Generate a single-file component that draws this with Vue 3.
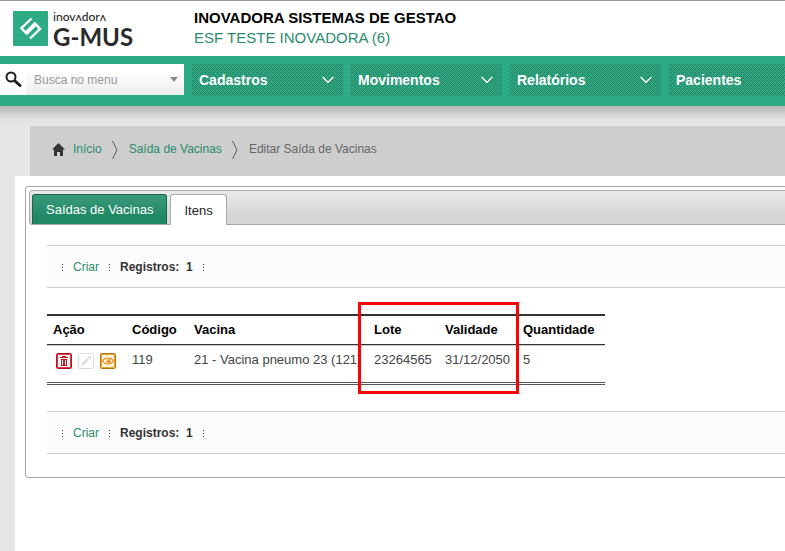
<script setup>
import { ref } from 'vue'

const search = ref('')
const menus = [
  { label: 'Cadastros', arrow: true },
  { label: 'Movimentos', arrow: true },
  { label: 'Relatórios', arrow: true },
  { label: 'Pacientes', arrow: false }
]
const columns = ['Ação', 'Código', 'Vacina', 'Lote', 'Validade', 'Quantidade']
const rows = [
  { codigo: '119', vacina: '21 - Vacina pneumo 23 (121)', lote: '23264565', validade: '31/12/2050', quantidade: '5' }
]
</script>

<template>
  <div class="page">
    <header class="top">
      <a class="logo" href="#" aria-label="inovadora G-MUS">
        <svg class="mark" viewBox="0 0 35 35">
          <rect width="35" height="35" rx="1" fill="#2cab84" />
          <g fill="none" stroke="#fff" stroke-width="2.400">
            <path d="M18.500 7.500L8.500 17l4 4.500L22.500 11.500" />
            <path d="M17 27.500L27 18l-4-4.500L13 23.500" />
          </g>
        </svg>
        <span class="words">
          <span class="brand">inovʌdorʌ</span>
          <span class="product">G-MUS</span>
        </span>
      </a>
      <div class="unit">
        <strong>INOVADORA SISTEMAS DE GESTAO</strong>
        <a href="#">ESF TESTE INOVADORA (6)</a>
      </div>
    </header>

    <nav class="bar">
      <label class="search">
        <svg class="lens" viewBox="0 0 18 18" aria-hidden="true">
          <circle cx="6" cy="6" r="4.500" fill="none" stroke="#1c1c1c" stroke-width="2" />
          <path d="M10 10l5 4.500" stroke="#1c1c1c" stroke-width="3" stroke-linecap="round" />
        </svg>
        <span class="combo">
          <input v-model="search" type="text" placeholder="Busca no menu" aria-label="Busca no menu" />
          <svg class="caret" viewBox="0 0 8 5" aria-hidden="true"><path d="M0 0h8L4 5z" fill="#888" /></svg>
        </span>
      </label>
      <button v-for="m in menus" :key="m.label" class="menu" type="button">
        <span>{{ m.label }}</span>
        <svg v-if="m.arrow" viewBox="0 0 12 8" aria-hidden="true">
          <path d="M0 2l6 6 6-6" fill="none" stroke="#1d6f56" stroke-width="1" />
          <path d="M.5 1L6 6.500 11.500 1" fill="none" stroke="#fff" stroke-width="1.500" />
        </svg>
      </button>
    </nav>

    <div class="backdrop">
      <nav class="crumbs">
        <svg class="home" viewBox="0 0 13 13" aria-hidden="true">
          <path d="M6.500 0L13 6.500h-2V13H8V9H5v4H2V6.500H0z" fill="#333" />
        </svg>
        <a href="#">Início</a>
        <svg class="sep" viewBox="0 0 6 18" aria-hidden="true"><path d="M.5 0l4.500 9L.5 18" fill="none" stroke="#555" /></svg>
        <a href="#">Saída de Vacinas</a>
        <svg class="sep" viewBox="0 0 6 18" aria-hidden="true"><path d="M.5 0l4.500 9L.5 18" fill="none" stroke="#555" /></svg>
        <span>Editar Saída de Vacinas</span>
      </nav>

      <main class="content">
        <section class="panel">
          <div class="tabs">
            <button class="tab" type="button">Saídas de Vacinas</button>
            <button class="tab current" type="button">Itens</button>
          </div>
          <div class="body">
            <div class="tools">
              <i class="dots"></i><a href="#">Criar</a><i class="dots"></i><b>Registros:&nbsp; 1</b><i class="dots"></i>
            </div>
            <div class="grid">
              <table>
                <colgroup>
                  <col class="c-acao" /><col class="c-codigo" /><col class="c-vacina" />
                  <col class="c-lote" /><col class="c-validade" /><col class="c-qtd" />
                </colgroup>
                <thead>
                  <tr><th v-for="c in columns" :key="c">{{ c }}</th></tr>
                </thead>
                <tbody>
                  <tr v-for="r in rows" :key="r.codigo">
                    <td>
                      <div class="actions">
                        <button type="button" aria-label="Excluir">
                          <svg viewBox="0 0 16 16">
                            <rect x=".5" y=".5" width="15" height="15" rx="1" fill="#fff" stroke="#b5121b" />
                            <rect x="1.500" y="1.500" width="13" height="13" fill="#fff" stroke="#dc3a42" />
                            <path d="M6 3h4v1h2v1H4V4h2zM5 6h6v7H5z" fill="#c4161f" />
                            <path d="M7 4h2v0H7zM6 7h1v5H6zM9 7h1v5H9z" fill="#fff" />
                          </svg>
                        </button>
                        <button type="button" aria-label="Editar" disabled>
                          <svg viewBox="0 0 16 16">
                            <rect x=".5" y=".5" width="15" height="15" rx="1" fill="#fff" stroke="#dcdcdc" />
                            <path d="M3 13l1-3 5.500-5.500 2 2L6 12zM10 4l1-1h1.500l.5.500V5l-1 1z" fill="#dedede" />
                          </svg>
                        </button>
                        <button type="button" aria-label="Visualizar">
                          <svg viewBox="0 0 16 16">
                            <rect x=".5" y=".5" width="15" height="15" rx="1" fill="#fff3da" stroke="#b5700c" />
                            <rect x="1.500" y="1.500" width="13" height="13" fill="none" stroke="#f0a637" />
                            <path d="M2.500 8C5 4 11 4 13.500 8 11 12 5 12 2.500 8z" fill="#fff" stroke="#ee8f1c" stroke-width="1.200" />
                            <circle cx="8.500" cy="8" r="2.200" fill="#ee8a12" />
                            <circle cx="8" cy="7" r=".8" fill="#fff" />
                          </svg>
                        </button>
                      </div>
                    </td>
                    <td>{{ r.codigo }}</td>
                    <td>{{ r.vacina }}</td>
                    <td>{{ r.lote }}</td>
                    <td>{{ r.validade }}</td>
                    <td>{{ r.quantidade }}</td>
                  </tr>
                </tbody>
              </table>
              <div class="highlight"></div>
            </div>
            <div class="tools">
              <i class="dots"></i><a href="#">Criar</a><i class="dots"></i><b>Registros:&nbsp; 1</b><i class="dots"></i>
            </div>
          </div>
        </section>
      </main>
    </div>
  </div>
</template>

<style>
body {
  margin: 0;
  background: #fff;
}
</style>

<style scoped>
.page {
  display: flex;
  flex-direction: column;
  min-height: 100vh;
  box-sizing: border-box;
  border-top: 1px solid #999;
  overflow: hidden;
  font-family: "Liberation Sans", Arial, sans-serif;
  font-size: 12px;
  color: #333;
}
a {
  color: #2b8c6d;
  text-decoration: none;
}
button {
  font: inherit;
  border: 0;
  margin: 0;
  padding: 0;
  background: none;
}
svg {
  display: block;
  flex: none;
}
.top {
  display: flex;
  height: 55px;
  background: #fff;
}
.logo {
  display: flex;
  flex: none;
  gap: 5px;
  width: 194px;
  padding: 10px 0 0 13px;
  box-sizing: border-box;
  color: #2a2a2a;
}
.mark {
  width: 35px;
  height: 35px;
}
.words {
  display: flex;
  flex-direction: column;
  font-family: Lato, sans-serif;
}
.brand {
  font-size: 12px;
  line-height: 11px;
  font-weight: 500;
}
.product {
  font-size: 24px;
  line-height: 29px;
  font-weight: 700;
}
.unit {
  display: flex;
  flex-direction: column;
  padding-top: 7px;
  font-size: 15px;
  line-height: 20px;
}
.unit strong {
  color: #000;
}
.bar {
  display: flex;
  gap: 8px;
  height: 50px;
  padding-top: 8px;
  box-sizing: border-box;
  background: #2cab84;
}
.search {
  display: flex;
  align-items: center;
  flex: none;
  width: 184px;
  height: 31px;
  background: #fff;
}
.lens {
  width: 18px;
  height: 18px;
  padding: 0 3px 0 5px;
}
.combo {
  display: flex;
  flex: 1;
  min-width: 0;
  align-items: center;
  align-self: stretch;
  padding: 0 6px 0 8px;
  background: linear-gradient(#fff 20%, #ededed);
}
.combo input {
  flex: 1;
  width: 100%;
  min-width: 0;
  border: 0;
  padding: 0;
  background: none;
  font: inherit;
  outline: none;
}
.combo input::placeholder {
  color: #999;
  opacity: 1;
}
.caret {
  width: 8px;
  height: 5px;
}
.menu {
  display: flex;
  align-items: center;
  justify-content: space-between;
  flex: none;
  width: 151px;
  height: 32px;
  padding: 0 9px 0 7px;
  font-size: 14px;
  font-weight: 700;
  color: #fff;
  background: #2cab84 url("data:image/svg+xml,%3Csvg xmlns='http://www.w3.org/2000/svg' width='4' height='4' shape-rendering='crispEdges'%3E%3Cpath d='M0 0h1v1H0zM2 0h1v1H2zM1 1h1v1H1zM0 2h1v1H0zM2 2h1v1H2zM3 3h1v1H3z' fill='%232a8163'/%3E%3C/svg%3E");
}
.menu svg {
  width: 12px;
  height: 8px;
}
.backdrop {
  display: flex;
  flex-direction: column;
  flex: 1;
  padding: 20px 0 0 15px;
  background: linear-gradient(#b5b5b3, #d2d2d0 8px, #e2e2e0 14px, #e6e6e4 20px);
}
.crumbs {
  display: flex;
  align-items: center;
  height: 50px;
  box-sizing: border-box;
  padding: 0 0 4px 22px;
  margin-left: 15px;
  background: #cecece;
  color: #666;
}
.home {
  width: 13px;
  height: 13px;
  margin-right: 8px;
}
.sep {
  width: 6px;
  height: 18px;
  margin: 2px 11px 0 10px;
}
.content {
  flex: 1;
  padding: 10px 0 0 10px;
  background: #fff;
}
.panel {
  margin-right: -10px;
  padding: 3px;
  border: 1px solid #a6a6a6;
  border-radius: 3px;
}
.tabs {
  display: flex;
  gap: 3px;
  height: 35px;
  box-sizing: border-box;
  padding: 3px 0 0 2px;
  border: 1px solid #aaa;
  border-radius: 3px;
  background: linear-gradient(#ebebeb, #d6d6d6 70%);
  font-size: 13px;
}
.tab {
  height: 30px;
  padding: 0 13px;
  border: 1px solid #17684c;
  border-bottom: 0;
  border-radius: 3px 3px 0 0;
  background: linear-gradient(#3b9b7c, #218865 70%);
  color: #fff;
}
.tab.current {
  height: 31px;
  border-color: #aaa;
  background: #fff;
  color: #222;
}
.body {
  padding: 20px 0 20px 18px;
}
.tools {
  display: flex;
  align-items: center;
  height: 43px;
  box-sizing: border-box;
  padding-left: 15px;
  border: solid #ccc;
  border-width: 1px 0;
  background: #fcfcfc;
}
.dots {
  width: 1px;
  height: 7px;
  margin-top: 2px;
  background: repeating-linear-gradient(#444 0 1px, transparent 1px 3px);
}
.tools a,
.tools b {
  margin: 0 10px;
}
.grid {
  position: relative;
  width: 558px;
  margin: 26px 0;
}
table {
  width: 100%;
  table-layout: fixed;
  border-collapse: separate;
  border-spacing: 0;
  border-top: 2px solid #333;
  border-bottom: 3px double #555;
  font-size: 13px;
  line-height: 16px;
}
.c-acao { width: 79px; }
.c-codigo { width: 62px; }
.c-vacina { width: 180px; }
.c-lote { width: 71px; }
.c-validade { width: 78px; }
.c-qtd { width: 88px; }
th {
  height: 28px;
  padding: 0 6px;
  border-bottom: 1px solid #333;
  text-align: left;
  color: #000;
}
td {
  height: 29px;
  padding: 6px 0 0 6px;
  border-top: 1px solid #ccc;
  vertical-align: top;
  white-space: nowrap;
  color: #444;
}
tbody td {
  height: 30px;
}
.actions {
  display: flex;
  gap: 6px;
  padding: 1px 0 0 3px;
}
.actions svg {
  width: 16px;
  height: 16px;
}
.highlight {
  position: absolute;
  top: -12px;
  left: 311px;
  width: 155px;
  height: 86px;
  border: 3px solid #fa0505;
}
</style>
